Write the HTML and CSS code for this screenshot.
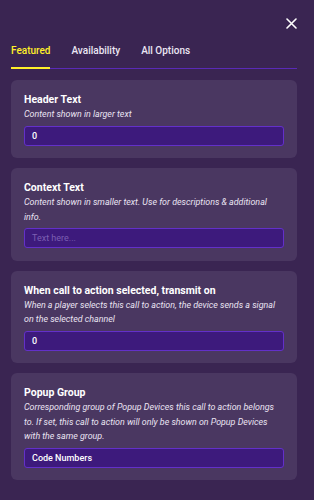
FILE: index.html
```html
<!DOCTYPE html>
<html>
<head>
<meta charset="utf-8">
<link rel="stylesheet" href="styles.css">
</head>
<body>
<div class="panel">
  <div class="topbar">
    <svg class="close" width="11" height="11" viewBox="0 0 11 11"><path d="M1 1L10 10M10 1L1 10" stroke="#fff" stroke-width="1.6" stroke-linecap="round"/></svg>
  </div>
  <div class="tabs">
    <div class="tab active">Featured</div>
    <div class="tab">Availability</div>
    <div class="tab">All Options</div>
  </div>
  <div class="cards">
    <div class="card">
      <div class="title">Header Text</div>
      <div class="desc">Content shown in larger text</div>
      <div class="input">0</div>
    </div>
    <div class="card">
      <div class="title">Context Text</div>
      <div class="desc">Content shown in smaller text. Use for descriptions &amp; additional info.</div>
      <div class="input placeholder">Text here...</div>
    </div>
    <div class="card">
      <div class="title">When call to action selected, transmit on</div>
      <div class="desc">When a player selects this call to action, the device sends a signal on the selected channel</div>
      <div class="input">0</div>
    </div>
    <div class="card">
      <div class="title">Popup Group</div>
      <div class="desc">Corresponding group of Popup Devices this call to action belongs to. If set, this call to action will only be shown on Popup Devices with the same group.</div>
      <div class="input">Code Numbers</div>
    </div>
  </div>
</div>
</body>
</html>
```
FILE: styles.css
```css
html, body {
  margin: 0;
  padding: 0;
  background: #3a2552;
  font-family: Roboto, "Noto Sans", sans-serif;
  color: #fff;
}
.panel {
  width: 314px;
  height: 500px;
  box-sizing: border-box;
  padding: 0 17px 0 11px;
  background: #3a2552;
}
.topbar {
  display: flex;
  justify-content: flex-end;
  padding-top: 18px;
  height: 25px;
}
.close {
  display: block;
}
.tabs {
  display: flex;
  gap: 21px;
  border-bottom: 1px solid #5a2ab8;
  height: 25px;
  margin-bottom: 11px;
}
.tab {
  font-size: 10px;
  font-weight: 500;
  line-height: 14px;
  color: #ece6f4;
  padding-top: 1px;
  padding-bottom: 9px;
}
.tab.active {
  color: #ffef2a;
  border-bottom: 2px solid #ffef2a;
  margin-bottom: -1px;
  height: 14px;
}
.cards {
  display: flex;
  flex-direction: column;
  gap: 10px;
}
.card {
  background: #4a3761;
  border-radius: 6px;
  padding: 13px 13px 12.5px;
}
.title {
  font-size: 10.5px;
  font-weight: 700;
  line-height: 14px;
  color: #fff;
}
.desc {
  font-size: 8.9px;
  font-style: italic;
  line-height: 14.5px;
  color: #ebe4f3;
  margin-bottom: 4px;
}
.input {
  height: 20px;
  box-sizing: border-box;
  border: 1px solid #6330c9;
  background: #3d1a7c;
  border-radius: 3px;
  padding: 0 7px;
  font-size: 9px;
  font-weight: 500;
  line-height: 18px;
  color: #fff;
}
.input.placeholder {
  color: #7c5fb2;
  font-weight: 400;
}
```
